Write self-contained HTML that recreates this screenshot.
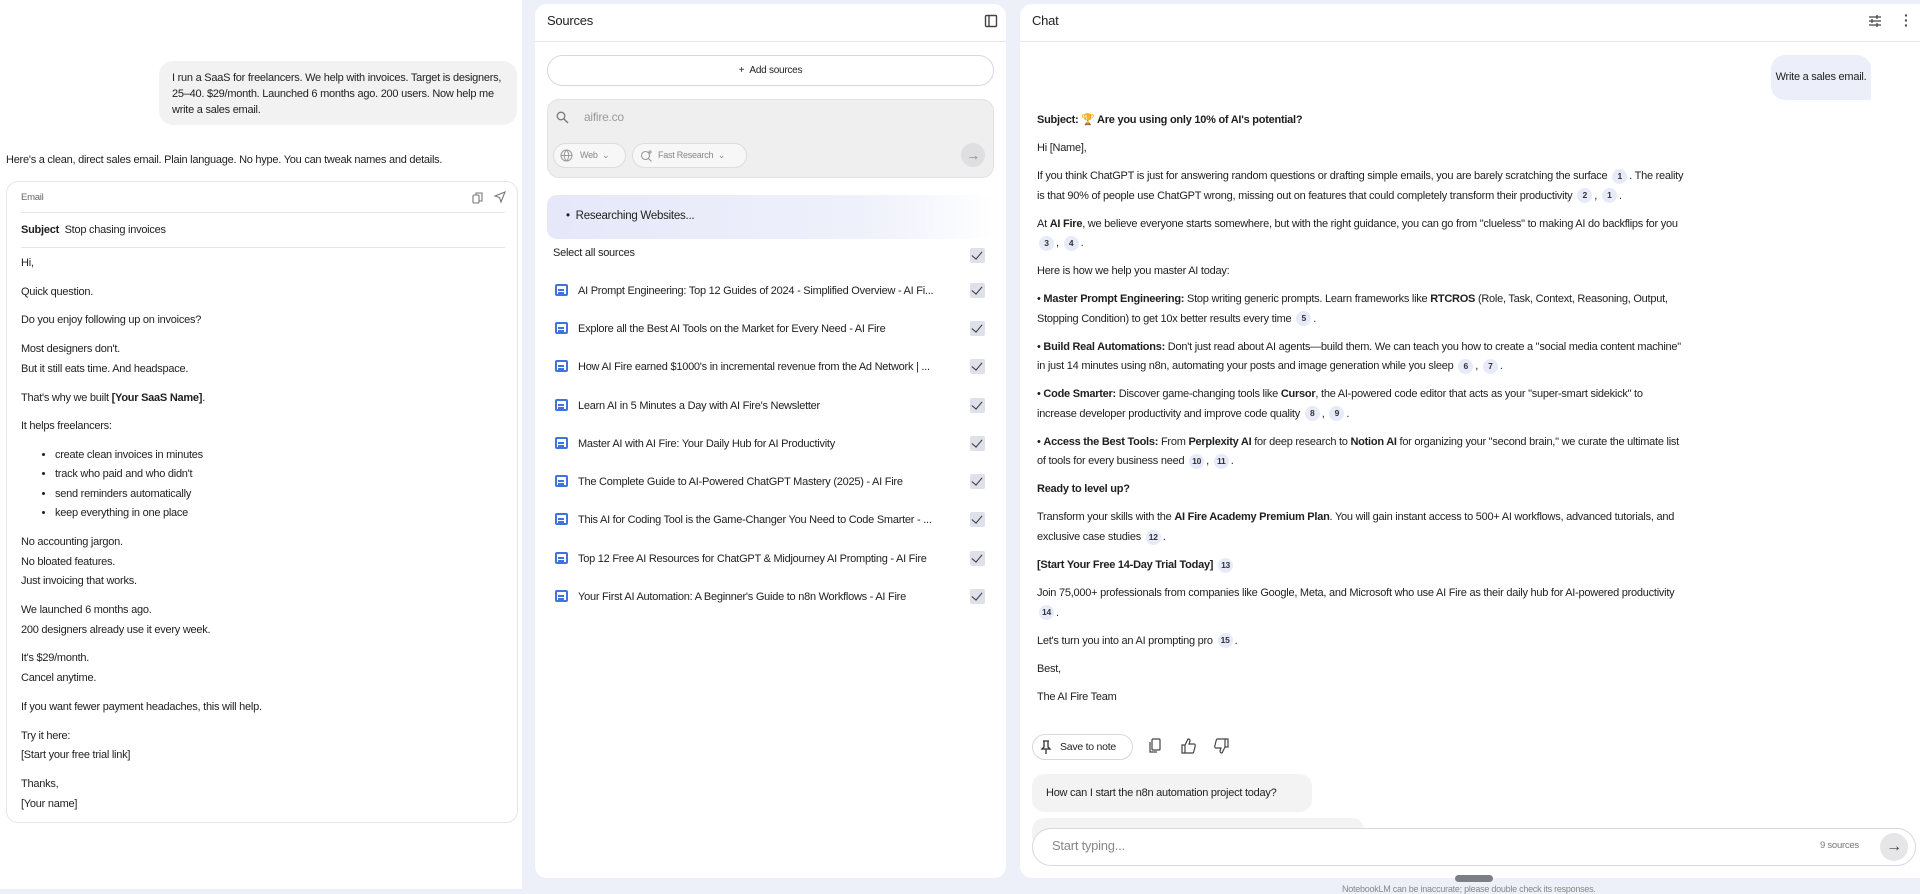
<!DOCTYPE html>
<html><head><meta charset="utf-8"><style>
*{box-sizing:border-box;margin:0;padding:0}
body{width:1920px;height:889px;overflow:hidden;background:#eef0f9;font-family:"Liberation Sans",sans-serif;color:#1f1f1f;position:relative;font-size:11px;letter-spacing:-0.25px}
.abs{position:absolute}
.left{left:0;top:0;width:522px;height:889px;background:#fff}
.panel{background:#fff;border-radius:12px}
.nw{white-space:nowrap}
.ub{background:#f2f2f2;border-radius:14px}
.email{left:6px;top:181px;width:512px;height:642px;border:1px solid #e6e6ea;border-radius:12px;background:#fff}
.body p{margin-bottom:9px;line-height:19.7px}
.body ul{margin:0 0 9px 0;padding-left:34px;line-height:19.5px}
.chat p{line-height:19.6px;margin-bottom:8.4px}
.c{display:inline-block;min-width:15px;height:15px;border-radius:8px;background:#e7eaf8;font-size:8.5px;font-weight:bold;text-align:center;line-height:15px;padding:0 3px;margin:0 2px;vertical-align:middle;color:#333}
.row{position:absolute;left:553px;width:440px;height:20px}
.row .ic{position:absolute;left:2px;top:3px;width:13px;height:12px;border:2px solid #3e73e0;border-radius:2px}
.row .ic:after{content:"";position:absolute;left:1px;top:3px;width:6px;height:2px;background:#3e73e0;box-shadow:0 3px 0 #3e73e0}
.row .t{position:absolute;left:25px;top:2px;white-space:nowrap;line-height:16px}
.cb{position:absolute;width:15px;height:15px;background:#dfe1ea;border-radius:2px}
.cb:after{content:"";position:absolute;left:4px;top:1px;width:5px;height:9px;border:solid #333;border-width:0 1.6px 1.6px 0;transform:rotate(40deg)}
</style></head><body>
<div class="abs left"></div>
<div class="abs ub" style="left:159px;top:61px;width:358px;height:64px"></div>
<div class="abs nw" style="left:172px;top:70px;line-height:16px">I run a SaaS for freelancers. We help with invoices. Target is designers,<br>25–40. $29/month. Launched 6 months ago. 200 users. Now help me<br>write a sales email.</div>
<div class="abs nw" style="left:6px;top:154px">Here's a clean, direct sales email. Plain language. No hype. You can tweak names and details.</div>
<div class="abs email">
 <div class="abs" style="left:14px;top:10px;font-size:9.5px;color:#666">Email</div>
 <svg class="abs" style="left:464px;top:9px" width="14" height="14" viewBox="0 0 14 14" fill="none" stroke="#777" stroke-width="1.1"><rect x="2" y="4" width="6" height="8" rx="1"/><path d="M5 4V2h6v8H8"/></svg>
 <svg class="abs" style="left:486px;top:8px" width="14" height="14" viewBox="0 0 14 14" fill="none" stroke="#777" stroke-width="1.1"><path d="M2 6L12 2 8 12 6.5 7.5z"/></svg>
 <div class="abs" style="left:14px;top:30px;width:484px;height:1px;background:#e6e6e6"></div>
 <div class="abs nw" style="left:14px;top:42px"><b>Subject</b>&nbsp; Stop chasing invoices</div>
 <div class="abs" style="left:14px;top:65px;width:484px;height:1px;background:#e6e6e6"></div>
 <div class="abs body nw" style="left:14px;top:72px">
  <p>Hi,</p><p>Quick question.</p><p>Do you enjoy following up on invoices?</p>
  <p>Most designers don't.<br>But it still eats time. And headspace.</p>
  <p>That's why we built <b>[Your SaaS Name]</b>.</p>
  <p>It helps freelancers:</p>
  <ul><li>create clean invoices in minutes</li><li>track who paid and who didn't</li><li>send reminders automatically</li><li>keep everything in one place</li></ul>
  <p>No accounting jargon.<br>No bloated features.<br>Just invoicing that works.</p>
  <p>We launched 6 months ago.<br>200 designers already use it every week.</p>
  <p>It's $29/month.<br>Cancel anytime.</p>
  <p>If you want fewer payment headaches, this will help.</p>
  <p>Try it here:<br>[Start your free trial link]</p>
  <p>Thanks,<br>[Your name]</p>
 </div>
</div>

<!-- Sources -->
<div class="abs panel" style="left:535px;top:4px;width:471px;height:874px"></div>
<div class="abs" style="left:547px;top:13px;font-size:13px">Sources</div>
<svg class="abs" style="left:984px;top:14px" width="14" height="14" viewBox="0 0 14 14" fill="none" stroke="#444" stroke-width="1.4"><rect x="1.5" y="1.5" width="11" height="11" rx="1"/><path d="M5 1.5v11"/></svg>
<div class="abs" style="left:535px;top:41px;width:471px;height:1px;background:#e3e5f0"></div>
<div class="abs" style="left:547px;top:55px;width:447px;height:31px;border:1px solid #d6d8de;border-radius:16px;text-align:center;line-height:29px;font-size:10px">+&nbsp;&nbsp;Add sources</div>
<div class="abs" style="left:547px;top:99px;width:447px;height:79px;background:#efeff0;border:1px solid #e2e2e4;border-radius:12px"></div>
<svg class="abs" style="left:556px;top:111px" width="13" height="13" viewBox="0 0 13 13" fill="none" stroke="#777" stroke-width="1.3"><circle cx="5" cy="5" r="3.8"/><path d="M8 8l4 4"/></svg>
<div class="abs" style="left:584px;top:110px;font-size:12px;color:#999">aifire.co</div>
<div class="abs" style="left:553px;top:143px;width:73px;height:25px;border:1px solid #ddd;border-radius:13px;background:#f7f7f7;font-size:9px;color:#888;line-height:23px;padding-left:26px">Web &nbsp;⌄</div>
<svg class="abs" style="left:560px;top:149px" width="13" height="13" viewBox="0 0 13 13" fill="none" stroke="#999" stroke-width="1"><circle cx="6.5" cy="6.5" r="5.5"/><path d="M1 6.5h11M6.5 1c-3 3-3 8 0 11M6.5 1c3 3 3 8 0 11"/></svg>
<div class="abs" style="left:632px;top:143px;width:115px;height:25px;border:1px solid #ddd;border-radius:13px;background:#f7f7f7;font-size:9px;color:#888;line-height:23px;padding-left:25px">Fast Research &nbsp;⌄</div>
<svg class="abs" style="left:640px;top:149px" width="13" height="13" viewBox="0 0 13 13" fill="none" stroke="#999" stroke-width="1.1"><circle cx="5.5" cy="6.5" r="4"/><path d="M8.5 9.5l3 3M10 1v4M8 3h4"/></svg>
<div class="abs" style="left:961px;top:143px;width:24px;height:24px;border-radius:12px;background:#dfdfe2;color:#888;text-align:center;line-height:24px;font-size:14px">→</div>
<div class="abs" style="left:547px;top:195px;width:447px;height:44px;border-radius:10px;background:linear-gradient(90deg,#e6e8fa,#eef0fb 70%,#fff)"></div>
<div class="abs" style="left:566px;top:210px;font-size:11.5px">•&nbsp;&nbsp;Researching Websites...</div>
<div class="abs" style="left:553px;top:247px;font-size:11px">Select all sources</div>
<div class="cb" style="left:970px;top:248px"></div>
<div class="row" style="top:281px"><div class="ic"></div><div class="t">AI Prompt Engineering: Top 12 Guides of 2024 - Simplified Overview - AI Fi...</div></div>
<div class="row" style="top:319px"><div class="ic"></div><div class="t">Explore all the Best AI Tools on the Market for Every Need - AI Fire</div></div>
<div class="row" style="top:357px"><div class="ic"></div><div class="t">How AI Fire earned $1000's in incremental revenue from the Ad Network | ...</div></div>
<div class="row" style="top:396px"><div class="ic"></div><div class="t">Learn AI in 5 Minutes a Day with AI Fire's Newsletter</div></div>
<div class="row" style="top:434px"><div class="ic"></div><div class="t">Master AI with AI Fire: Your Daily Hub for AI Productivity</div></div>
<div class="row" style="top:472px"><div class="ic"></div><div class="t">The Complete Guide to AI-Powered ChatGPT Mastery (2025) - AI Fire</div></div>
<div class="row" style="top:510px"><div class="ic"></div><div class="t">This AI for Coding Tool is the Game-Changer You Need to Code Smarter - ...</div></div>
<div class="row" style="top:549px"><div class="ic"></div><div class="t">Top 12 Free AI Resources for ChatGPT &amp; Midjourney AI Prompting - AI Fire</div></div>
<div class="row" style="top:587px"><div class="ic"></div><div class="t">Your First AI Automation: A Beginner's Guide to n8n Workflows - AI Fire</div></div>
<div class="cb" style="left:970px;top:283px"></div><div class="cb" style="left:970px;top:321px"></div><div class="cb" style="left:970px;top:359px"></div><div class="cb" style="left:970px;top:398px"></div><div class="cb" style="left:970px;top:436px"></div><div class="cb" style="left:970px;top:474px"></div><div class="cb" style="left:970px;top:512px"></div><div class="cb" style="left:970px;top:551px"></div><div class="cb" style="left:970px;top:589px"></div>

<!-- Chat -->
<div class="abs panel" style="left:1020px;top:4px;width:900px;height:874px;border-radius:12px 0 0 12px"></div>
<div class="abs" style="left:1032px;top:13px;font-size:13px">Chat</div>
<svg class="abs" style="left:1868px;top:14px" width="14" height="14" viewBox="0 0 14 14" stroke="#444" stroke-width="1.3"><path d="M1 3h12M1 7h12M1 11h12"/><path d="M9 1v4M4 5v4M9 9v4"/></svg>
<div class="abs" style="left:1904px;top:13px;font-size:14px;font-weight:bold;line-height:5px;color:#444">·<br>·<br>·</div>
<div class="abs" style="left:1020px;top:41px;width:900px;height:1px;background:#e3e5f0"></div>
<div class="abs" style="left:1771px;top:55px;width:100px;height:45px;background:#eceefa;border-radius:14px 14px 0 14px;line-height:45px;text-align:center">Write a sales email.</div>
<div class="abs chat nw" style="left:1037px;top:111px">
<p><b>Subject: <span style="color:#c9921e">🏆</span> Are you using only 10% of AI's potential?</b></p>
<p>Hi [Name],</p>
<p>If you think ChatGPT is just for answering random questions or drafting simple emails, you are barely scratching the surface <span class="c">1</span>. The reality<br>is that 90% of people use ChatGPT wrong, missing out on features that could completely transform their productivity <span class="c">2</span>, <span class="c">1</span>.</p>
<p>At <b>AI Fire</b>, we believe everyone starts somewhere, but with the right guidance, you can go from "clueless" to making AI do backflips for you<br><span class="c">3</span>, <span class="c">4</span>.</p>
<p>Here is how we help you master AI today:</p>
<p>• <b>Master Prompt Engineering:</b> Stop writing generic prompts. Learn frameworks like <b>RTCROS</b> (Role, Task, Context, Reasoning, Output,<br>Stopping Condition) to get 10x better results every time <span class="c">5</span>.</p>
<p>• <b>Build Real Automations:</b> Don't just read about AI agents—build them. We can teach you how to create a "social media content machine"<br>in just 14 minutes using n8n, automating your posts and image generation while you sleep <span class="c">6</span>, <span class="c">7</span>.</p>
<p>• <b>Code Smarter:</b> Discover game-changing tools like <b>Cursor</b>, the AI-powered code editor that acts as your "super-smart sidekick" to<br>increase developer productivity and improve code quality <span class="c">8</span>, <span class="c">9</span>.</p>
<p>• <b>Access the Best Tools:</b> From <b>Perplexity AI</b> for deep research to <b>Notion AI</b> for organizing your "second brain," we curate the ultimate list<br>of tools for every business need <span class="c">10</span>, <span class="c">11</span>.</p>
<p><b>Ready to level up?</b></p>
<p>Transform your skills with the <b>AI Fire Academy Premium Plan</b>. You will gain instant access to 500+ AI workflows, advanced tutorials, and<br>exclusive case studies <span class="c">12</span>.</p>
<p><b>[Start Your Free 14-Day Trial Today]</b> <span class="c">13</span></p>
<p>Join 75,000+ professionals from companies like Google, Meta, and Microsoft who use AI Fire as their daily hub for AI-powered productivity<br><span class="c">14</span>.</p>
<p>Let's turn you into an AI prompting pro <span class="c">15</span>.</p>
<p>Best,</p>
<p>The AI Fire Team</p>
</div>
<div class="abs" style="left:1032px;top:734px;width:101px;height:26px;border:1px solid #d8d8dc;border-radius:13px;line-height:24px;padding-left:27px;font-size:10.5px">Save to note</div>
<svg class="abs" style="left:1040px;top:740px" width="12" height="14" viewBox="0 0 12 14" fill="none" stroke="#333" stroke-width="1.3"><path d="M3 1h6M4 1v6L2 9h8L8 7V1M6 9v5"/></svg>
<svg class="abs" style="left:1148px;top:738px" width="14" height="16" viewBox="0 0 14 16" fill="none" stroke="#444" stroke-width="1.2"><rect x="4" y="1" width="8" height="11" rx="1"/><path d="M2 4v10h7"/></svg>
<svg class="abs" style="left:1181px;top:738px" width="16" height="16" viewBox="0 0 16 16" fill="none" stroke="#444" stroke-width="1.2"><path d="M1 7h3v8H1zM4 7l3-6c1.5 0 2 1 2 2L8 6h5c1 0 1.5 1 1.2 2l-1.5 6c-.2.6-.7 1-1.3 1H4"/></svg>
<svg class="abs" style="left:1213px;top:738px" width="16" height="16" viewBox="0 0 16 16" fill="none" stroke="#444" stroke-width="1.2"><path d="M15 9h-3V1h3zM12 9l-3 6c-1.5 0-2-1-2-2l1-3H3c-1 0-1.5-1-1.2-2l1.5-6C3.5 1.4 4 1 4.6 1H12"/></svg>
<div class="abs" style="left:1032px;top:774px;width:280px;height:38px;background:#f3f3f4;border-radius:12px;line-height:38px;padding-left:14px">How can I start the n8n automation project today?</div>
<div class="abs" style="left:1032px;top:818px;width:332px;height:30px;background:#f3f3f4;border-radius:12px"></div>
<div class="abs" style="left:1032px;top:828px;width:884px;height:38px;background:#fff;border:1px solid #d6d8e0;border-radius:19px"></div>
<div class="abs" style="left:1052px;top:838px;font-size:13px;color:#888">Start typing...</div>
<div class="abs" style="left:1820px;top:840px;font-size:9.5px;color:#777">9 sources</div>
<div class="abs" style="left:1880px;top:833px;width:28px;height:28px;border-radius:14px;background:#e6e6e9;text-align:center;line-height:27px;font-size:16px;color:#444">→</div>
<div class="abs" style="left:1455px;top:875px;width:38px;height:7px;border-radius:4px;background:#7d7f86"></div>
<div class="abs nw" style="left:1342px;top:884px;font-size:9px;color:#888">NotebookLM can be inaccurate; please double check its responses.</div>
</body></html>
